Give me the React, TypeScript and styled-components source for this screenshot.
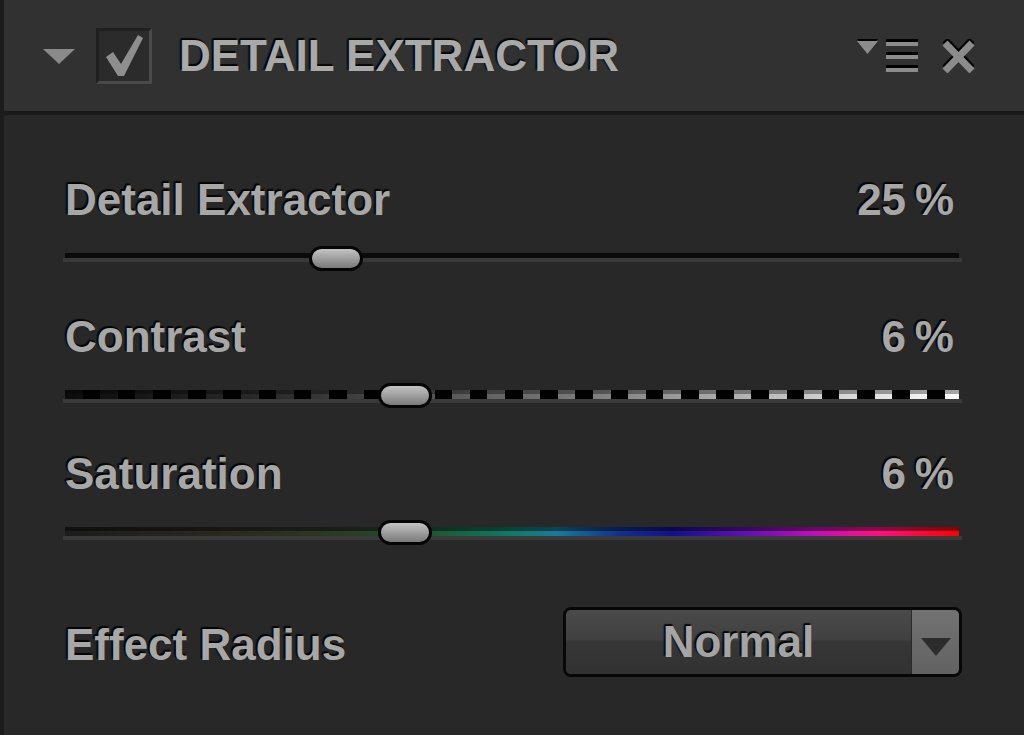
import * as React from 'react'
import styled, { createGlobalStyle } from 'styled-components'

interface SliderData {
  label: string,
  value: string,
  pos: number,
  kind: 'plain' | 'dashed' | 'hue'
}

const sliders: Array<SliderData> = [
  { label: 'Detail Extractor', value: '25\u2009%', pos: 0.303, kind: 'plain' },
  { label: 'Contrast', value: '6\u2009%', pos: 0.38, kind: 'dashed' },
  { label: 'Saturation', value: '6\u2009%', pos: 0.38, kind: 'hue' }
]

const GlobalStyle = createGlobalStyle`
  html, body {
    margin: 0;
    padding: 0;
    background: #282828;
  }
  body {
    font-family: "Liberation Sans", Arial, Helvetica, sans-serif;
  }
`

const shadow = '-1px -2px 1px rgba(0,0,0,0.85), -2px -1px 1px rgba(0,0,0,0.6)'

const Panel = styled.div`
  width: 1024px;
  height: 735px;
  box-sizing: border-box;
  border-left: 4px solid #1c1c1c;
  background: #282828;
  display: flex;
  flex-direction: column;
  overflow: hidden;
`

const Header = styled.div`
  height: 111px;
  flex-shrink: 0;
  background: #313131;
  border-bottom: 4px solid #1a1a1a;
  display: flex;
  align-items: center;
  padding: 0 49px 0 39px;
`

const Collapse = styled.div`
  width: 0;
  height: 0;
  border-left: 16px solid transparent;
  border-right: 16px solid transparent;
  border-top: 15px solid #8a8a8a;
  margin-right: 21px;
  margin-top: 2px;
`

const CheckBox = styled.div`
  width: 56px;
  height: 56px;
  box-sizing: border-box;
  background: #2b2b2b;
  border-top: 3px solid #202020;
  border-left: 3px solid #202020;
  border-right: 3px solid #4a4a4a;
  border-bottom: 3px solid #4a4a4a;
  display: flex;
  align-items: center;
  justify-content: center;
`

const Title = styled.div`
  margin-left: 27px;
  font-size: 44px;
  font-weight: bold;
  line-height: 50px;
  margin-top: 1px;
  color: #a9a9a9;
  text-shadow: ${shadow};
  flex: 1;
  white-space: nowrap;
`

const HeaderIcons = styled.div`
  display: flex;
  align-items: flex-start;
  gap: 23px;
  padding-top: 1px;
`

const Body = styled.div`
  flex: 1;
  padding: 60px 62px 0 61px;
  display: flex;
  flex-direction: column;
`

const SliderRow = styled.div`
  display: flex;
  flex-direction: column;
  & + & {
    margin-top: 41px;
  }
`

const LabelLine = styled.div`
  display: flex;
  justify-content: space-between;
  height: 50px;
  padding-right: 8px;
`

const Label = styled.span`
  font-size: 44px;
  font-weight: bold;
  line-height: 50px;
  color: #a7a7a7;
  text-shadow: ${shadow};
  white-space: nowrap;
`

const Slider = styled.div`
  position: relative;
  height: 25px;
  margin-top: 21px;
  margin-right: 3px;
  padding-top: 7px;
  box-sizing: border-box;
`

const Bar = styled.div<{ $kind: string }>`
  position: relative;
  height: ${p => p.$kind === 'plain' ? 5 : 9}px;
  background: ${p => {
    if (p.$kind === 'dashed') {
      return `linear-gradient(rgba(0,0,0,0.35) 0 40%, transparent 40%),
        repeating-linear-gradient(90deg, transparent 0 17.6px, #000 17.6px 35.2px),
        linear-gradient(90deg, #0c0c0c 0%, #2e2e2e 25%, #808080 60%, #ffffff 100%)`
    }
    if (p.$kind === 'hue') {
      return `linear-gradient(rgba(0,0,0,0.45) 0 45%, transparent 45%),
        linear-gradient(90deg, #1c1c1c 0%, #2a2820 18%, #2d3a26 32%, #1c5a3a 42%, #0f7a66 50%, #1a7a9a 55%, #12308a 62%, #14108a 68%, #6a10b0 77%, #c010b8 84%, #ff1080 91%, #ff0000 100%)`
    }
    return '#0b0b0b'
  }};
  &::after {
    content: '';
    position: absolute;
    left: -2px;
    right: -3px;
    top: 100%;
    height: 4px;
    background: #3a3a3a;
  }
`

const Thumb = styled.div`
  position: absolute;
  top: 0;
  width: 54px;
  height: 25px;
  box-sizing: border-box;
  border: 3px solid #050505;
  border-radius: 13px;
  background: linear-gradient(#c4c4c4 0%, #a2a2a2 45%, #7a7a7a 100%);
  z-index: 2;
`

const RadiusRow = styled.div`
  display: flex;
  align-items: center;
  justify-content: space-between;
  height: 70px;
  margin-top: 62px;
`

const RadiusLabel = styled(Label)`
  padding-top: 5px;
`

const Dropdown = styled.div`
  width: 399px;
  height: 70px;
  box-sizing: border-box;
  border: 3px solid #070707;
  border-radius: 8px;
  display: flex;
  overflow: hidden;
`

const DropdownValue = styled.div`
  flex: 1;
  text-align: center;
  font-size: 44px;
  font-weight: bold;
  line-height: 64px;
  color: #a4a4a4;
  text-shadow: ${shadow};
  background: linear-gradient(#4a4a4a 0%, #404040 46%, #363636 50%, #323232 100%);
`

const DropdownArrow = styled.div`
  width: 47px;
  background: linear-gradient(#727272, #626262);
  border-left: 1px solid #2a2a2a;
  display: flex;
  justify-content: center;
  align-items: center;
  &::before {
    content: '';
    width: 0;
    height: 0;
    margin-top: 10px;
    border-left: 15px solid transparent;
    border-right: 15px solid transparent;
    border-top: 18px solid #2c2c2c;
  }
`

const MenuIcon = () => (
  <svg width="62" height="34" viewBox="0 0 62 34">
    <polygon points="0,0 21,0 10.5,13" fill="#000" />
    <polygon points="0,2 21,2 10.5,15" fill="#8c8c8c" />
    {[0, 13, 26].map(y => (
      <g key={y}>
        <rect x="29" y={y} width="32" height="3" fill="#000" />
        <rect x="29" y={y + 3} width="32" height="4" fill="#8c8c8c" />
      </g>
    ))}
  </svg>
)

const CloseIcon = () => (
  <svg width="33" height="34" viewBox="0 0 33 34">
    <g stroke="#000" strokeWidth="7">
      <line x1="3" y1="1" x2="30" y2="29" />
      <line x1="30" y1="1" x2="3" y2="29" />
    </g>
    <g stroke="#8c8c8c" strokeWidth="7">
      <line x1="3" y1="4" x2="30" y2="32" />
      <line x1="30" y1="4" x2="3" y2="32" />
    </g>
  </svg>
)

const CheckMark = () => (
  <svg width="42" height="44" viewBox="0 0 42 44">
    <polygon points="3,23 10,18 18,30 35,1 40,4 21,42 15,42" fill="#8e8e8e" />
  </svg>
)

const App: React.FunctionComponent = () => {
  return (
    <>
      <GlobalStyle />
      <Panel>
        <Header>
          <Collapse />
          <CheckBox>
            <CheckMark />
          </CheckBox>
          <Title>DETAIL EXTRACTOR</Title>
          <HeaderIcons>
            <MenuIcon />
            <CloseIcon />
          </HeaderIcons>
        </Header>
        <Body>
          {
            sliders.map((slider: SliderData) => {
              return (
                <SliderRow key={slider.label}>
                  <LabelLine>
                    <Label>{slider.label}</Label>
                    <Label>{slider.value}</Label>
                  </LabelLine>
                  <Slider>
                    <Bar $kind={slider.kind} />
                    <Thumb style={{ left: `calc(${slider.pos * 100}% - 27px)` }} />
                  </Slider>
                </SliderRow>
              )
            })
          }
          <RadiusRow>
            <RadiusLabel>Effect Radius</RadiusLabel>
            <Dropdown>
              <DropdownValue>Normal</DropdownValue>
              <DropdownArrow />
            </Dropdown>
          </RadiusRow>
        </Body>
      </Panel>
    </>
  )
}

export default App
